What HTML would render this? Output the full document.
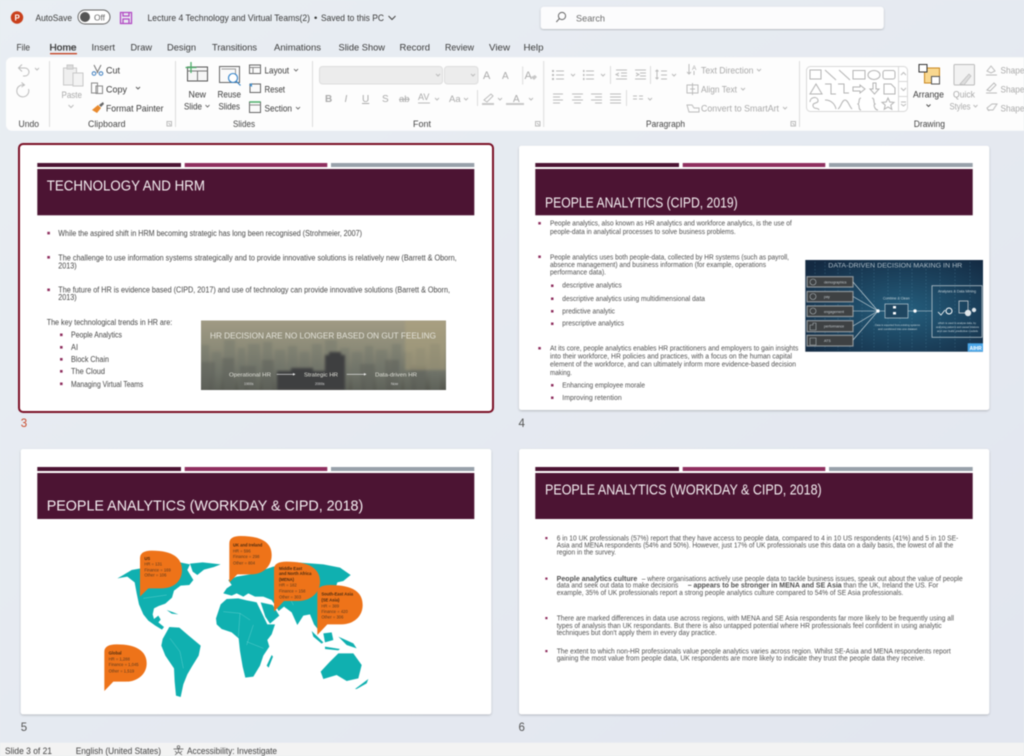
<!DOCTYPE html>
<html lang="en"><head><meta charset="utf-8"><title>Lecture 4 Technology and Virtual Teams</title>
<style>
html,body{margin:0;padding:0;width:1024px;height:756px;overflow:hidden;background:#e8ecf1}
svg{display:block;filter:blur(.42px)}
text{font-family:"Liberation Sans",sans-serif;white-space:pre}
.u{font-size:9.5px;fill:#3a3a3a}
.g{font-size:9.5px;fill:#a9a9a9}
.l{font-size:9px;fill:#444}
.t{font-size:14.5px;fill:#f4eef1}
.a{font-size:8px;fill:#454545}
.b{font-size:7.6px;fill:#505050}
.c{font-size:7px;fill:#505050}
.mm{font-size:12.5px;fill:#5a3a20}
.mb{font-size:12.5px;fill:#4a2a10;font-weight:bold}
.ic{fill:none;stroke:#8a8a8a;stroke-width:1}
.dis{fill:none;stroke:#bcbcbc;stroke-width:1}
</style></head><body>
<svg width="1024" height="756" viewBox="0 0 1024 756" xmlns="http://www.w3.org/2000/svg">
<defs>
<linearGradient id="bg" x1="0" y1="0" x2="1" y2="1"><stop offset="0" stop-color="#e9eef3"/><stop offset="1" stop-color="#e2e6ef"/></linearGradient>
<linearGradient id="city" x1="0" y1="0" x2="0" y2="1"><stop offset="0" stop-color="#a09a84"/><stop offset=".4" stop-color="#8c8b78"/><stop offset=".75" stop-color="#6f7268"/><stop offset="1" stop-color="#55574f"/></linearGradient>
<radialGradient id="net" cx=".55" cy=".55" r=".7"><stop offset="0" stop-color="#255f7e"/><stop offset="1" stop-color="#142a42"/></radialGradient>
<clipPath id="cp1"><rect x="201" y="320.500" width="245" height="69.500"/></clipPath>
<filter id="sh" x="-5%" y="-5%" width="110%" height="110%"><feDropShadow dx="0" dy="1" stdDeviation="1" flood-color="#000" flood-opacity=".22"/></filter>
</defs>
<rect width="1024" height="756" fill="url(#bg)"/>

<!-- title bar -->
<circle cx="17" cy="17.500" r="6.200" fill="#c9401c"/><text x="14.500" y="20.500" style="font-size:8px;font-weight:bold;fill:#fff">P</text>
<text class="u" x="35.500" y="21" textLength="36.500" lengthAdjust="spacingAndGlyphs">AutoSave</text>
<rect x="78" y="10" width="32" height="14" rx="7" fill="#fff" stroke="#666" stroke-width="1"/><circle cx="85" cy="17" r="5" fill="#555"/>
<text x="94" y="20.500" style="font-size:8.500px;fill:#666" textLength="11" lengthAdjust="spacingAndGlyphs">Off</text>
<path d="M120.500 12.500h11v11h-11zM123 12.500v3.500h6v-3.500M123 23.500v-4.500h6v4.500" fill="none" stroke="#b146c2" stroke-width="1.300"/>
<text class="u" x="147.500" y="21" textLength="162.500" lengthAdjust="spacingAndGlyphs">Lecture 4 Technology and Virtual Teams(2)</text>
<text class="u" x="314" y="21">•</text>
<text class="u" x="321" y="21" textLength="63" lengthAdjust="spacingAndGlyphs">Saved to this PC</text>
<path d="M388.500 16l3.500 3.500 3.500-3.500" fill="none" stroke="#444" stroke-width="1"/>
<rect x="540.700" y="6.700" width="343" height="22.300" rx="3" fill="#fcfcfd" filter="url(#sh)"/>
<circle cx="562" cy="16" r="3.600" fill="none" stroke="#666" stroke-width="1"/><path d="M559.300 18.700l-3 3.300" stroke="#666" stroke-width="1"/>
<text x="576" y="21.500" style="font-size:9.500px;fill:#6c6c6c" textLength="29" lengthAdjust="spacingAndGlyphs">Search</text>

<!-- tabs -->
<text class="u" x="16.500" y="50.500" textLength="13.500" lengthAdjust="spacingAndGlyphs">File</text>
<text class="u" x="49.500" y="50.500" textLength="27" lengthAdjust="spacingAndGlyphs" style="stroke:#333;stroke-width:.25;fill:#333">Home</text>
<rect x="50" y="53" width="27" height="1.300" fill="#c43e1c"/>
<text class="u" x="91.500" y="50.500" textLength="23.500" lengthAdjust="spacingAndGlyphs">Insert</text>
<text class="u" x="130.500" y="50.500" textLength="21.500" lengthAdjust="spacingAndGlyphs">Draw</text>
<text class="u" x="167" y="50.500" textLength="29" lengthAdjust="spacingAndGlyphs">Design</text>
<text class="u" x="212" y="50.500" textLength="45" lengthAdjust="spacingAndGlyphs">Transitions</text>
<text class="u" x="274" y="50.500" textLength="47" lengthAdjust="spacingAndGlyphs">Animations</text>
<text class="u" x="338.500" y="50.500" textLength="46.500" lengthAdjust="spacingAndGlyphs">Slide Show</text>
<text class="u" x="399.500" y="50.500" textLength="30.500" lengthAdjust="spacingAndGlyphs">Record</text>
<text class="u" x="445" y="50.500" textLength="29" lengthAdjust="spacingAndGlyphs">Review</text>
<text class="u" x="489" y="50.500" textLength="21" lengthAdjust="spacingAndGlyphs">View</text>
<text class="u" x="523.500" y="50.500" textLength="20" lengthAdjust="spacingAndGlyphs">Help</text>

<!-- ribbon -->
<rect x="6" y="57.300" width="1030" height="73.500" rx="6" fill="#fdfdfd"/>
<g stroke="#dcdcdc" stroke-width="1"><path d="M49.500 61v66M175.500 61v66M312.500 61v66M543.700 61v66M799.500 61v66"/></g>
<text class="l" x="18.500" y="127" textLength="20.500" lengthAdjust="spacingAndGlyphs">Undo</text>
<text class="l" x="88" y="127" textLength="37.500" lengthAdjust="spacingAndGlyphs">Clipboard</text>
<text class="l" x="233" y="127" textLength="22" lengthAdjust="spacingAndGlyphs">Slides</text>
<text class="l" x="413" y="127" textLength="18" lengthAdjust="spacingAndGlyphs">Font</text>
<text class="l" x="646" y="127" textLength="39" lengthAdjust="spacingAndGlyphs">Paragraph</text>
<text class="l" x="913.700" y="127" textLength="31.300" lengthAdjust="spacingAndGlyphs">Drawing</text>
<path class="dis" d="M167 121.500h4.500v4.500h-4.500zM168.500 123l2 2" stroke-width=".8"/>
<path class="dis" d="M535.500 121.500h4.500v4.500h-4.500zM537 123l2 2" stroke-width=".8"/>
<path class="dis" d="M791 121.500h4.500v4.500h-4.500zM792.500 123l2 2" stroke-width=".8"/>

<!-- undo / redo -->
<path class="dis" d="M22 64.500l-3.500 3.500 3.500 3.500M18.500 68h6.500a4 4 0 0 1 0 8h-2" stroke-width="1.200"/>
<path class="dis" d="M35 68l2 2 2-2" stroke-width=".8"/>
<path class="dis" d="M21.500 82.500l3 2.500-3 2M24 85a6 6 0 1 0 4.500 4" stroke-width="1.200"/>

<!-- clipboard -->
<path d="M63.500 68h13v17h-13z" fill="#efefef" stroke="#c8c8c8"/><rect x="67" y="65" width="6" height="4" fill="#dcdcdc" stroke="#c8c8c8"/><rect x="73" y="73" width="10" height="13" fill="#f3f3f3" stroke="#c8c8c8"/>
<text class="g" x="61.500" y="98" textLength="20.500" lengthAdjust="spacingAndGlyphs">Paste</text>
<path class="dis" d="M68.500 105l2.500 2.500 2.500-2.500" stroke-width=".8"/>
<path d="M94 65l4 8M101 65l-4 8" stroke="#777" fill="none"/><circle cx="94" cy="73.500" r="1.800" fill="none" stroke="#3f7fbf"/><circle cx="101" cy="73.500" r="1.800" fill="none" stroke="#3f7fbf"/>
<text class="u" x="106" y="73.500" textLength="14" lengthAdjust="spacingAndGlyphs">Cut</text>
<path class="ic" d="M91.500 83h6v10h-6zM96 86h6.500v7.500h-6.500z"/>
<text class="u" x="106" y="92.500" textLength="21" lengthAdjust="spacingAndGlyphs">Copy</text>
<path d="M136 87l2 2 2-2" fill="none" stroke="#555" stroke-width=".9"/>
<path d="M92 110l6-5 3 3-4 5z" fill="#e98a2d"/><path d="M99 105l4-3 1 2-3 3z" fill="#666"/>
<text class="u" x="106" y="111.500" textLength="57.500" lengthAdjust="spacingAndGlyphs">Format Painter</text>

<!-- slides -->
<rect x="187.500" y="67" width="20" height="14" fill="#f6f6f6" stroke="#555"/><path d="M187.500 71h20M197.500 71v10" stroke="#777"/>
<path d="M191 62v11M185.500 67.500h11" stroke="#4caf6a" stroke-width="1.300"/>
<text class="u" x="188.500" y="97.500" textLength="17.500" lengthAdjust="spacingAndGlyphs">New</text>
<text class="u" x="184" y="109.500" textLength="18" lengthAdjust="spacingAndGlyphs">Slide</text><path d="M205.500 105l2 2 2-2" fill="none" stroke="#555" stroke-width=".8"/>
<path d="M219.500 66.500h20v16h-20z" fill="#fafafa" stroke="#666"/><path d="M221.500 69h14v13" fill="none" stroke="#999"/>
<circle cx="233" cy="78" r="4.500" fill="#fff" stroke="#2f80c8" stroke-width="1.100"/><path d="M236.500 81.500l4 4" stroke="#2f80c8" stroke-width="1.100"/>
<text class="u" x="217.500" y="97.500" textLength="23.500" lengthAdjust="spacingAndGlyphs">Reuse</text>
<text class="u" x="218.500" y="109.500" textLength="21.500" lengthAdjust="spacingAndGlyphs">Slides</text>
<rect x="249.500" y="65" width="11" height="8.500" fill="#fafafa" stroke="#666"/><path d="M249.500 67.500h11M253 67.500v6" stroke="#888"/>
<text class="u" x="264.500" y="73.500" textLength="24.500" lengthAdjust="spacingAndGlyphs">Layout</text><path d="M294 69l2 2 2-2" fill="none" stroke="#555" stroke-width=".8"/>
<rect x="250" y="84" width="10.500" height="8.500" fill="#fafafa" stroke="#666"/><path d="M249 85l3-2v4z" fill="#3f8fd0"/>
<text class="u" x="264.500" y="92.500" textLength="20.500" lengthAdjust="spacingAndGlyphs">Reset</text>
<rect x="249.500" y="102" width="11" height="10.500" fill="#fafafa" stroke="#666"/><path d="M249.500 102h11" stroke="#4caf6a" stroke-width="1.500"/><path d="M249.500 105h11" stroke="#888"/>
<text class="u" x="264.500" y="111.500" textLength="27.500" lengthAdjust="spacingAndGlyphs">Section</text><path d="M296 107l2 2 2-2" fill="none" stroke="#555" stroke-width=".8"/>

<!-- font -->
<rect x="319.500" y="66.500" width="123" height="17.500" rx="3" fill="#ececec" stroke="#dedede"/><path class="dis" d="M436 74l2 2 2-2" stroke-width=".8"/>
<rect x="444.500" y="66.500" width="33.500" height="17.500" rx="3" fill="#ececec" stroke="#dedede"/><path class="dis" d="M471 74l2 2 2-2" stroke-width=".8"/>
<text x="483" y="79" style="font-size:11px;fill:#aaa">A</text><text x="502" y="79" style="font-size:10px;fill:#aaa">A</text>
<path d="M522.700 66.500v18" stroke="#dcdcdc"/>
<text x="524.500" y="79" style="font-size:11px;fill:#aaa">A</text><path d="M531 77l3 3 3-3-2-2z" fill="#c8c8c8"/>
<text x="325" y="102" style="font-size:10px;fill:#aaa;font-weight:bold">B</text>
<text x="344.500" y="102" style="font-size:10px;fill:#aaa;font-style:italic">I</text>
<text x="362" y="102" style="font-size:10px;fill:#aaa;text-decoration:underline">U</text>
<text x="382" y="102" style="font-size:10px;fill:#aaa">S</text>
<text x="399" y="102" style="font-size:9.500px;fill:#aaa;text-decoration:line-through">ab</text>
<text x="418" y="100" style="font-size:9px;fill:#aaa">AV</text><path class="dis" d="M418 103h12" stroke-width=".8"/>
<path class="dis" d="M435 98l2 2 2-2" stroke-width=".8"/>
<text x="449" y="102" style="font-size:9.500px;fill:#aaa">Aa</text><path class="dis" d="M464 98l2 2 2-2" stroke-width=".8"/>
<path d="M477.500 90v16" stroke="#dcdcdc"/>
<path class="dis" d="M484 100l7-6 2 2-6 6z"/><rect x="482" y="103" width="12" height="2" fill="#c8c8c8"/>
<path class="dis" d="M498 98l2 2 2-2" stroke-width=".8"/>
<text x="513" y="102" style="font-size:10px;fill:#aaa">A</text><rect x="506" y="103" width="18" height="2" fill="#c8c8c8"/><path class="dis" d="M529 98l2 2 2-2" stroke-width=".8"/>

<!-- paragraph -->
<path class="dis" d="M556 71h8M556 75h8M556 79h8"/><path d="M552 70h2v2h-2zM552 74h2v2h-2zM552 78h2v2h-2z" fill="#bbb"/><path class="dis" d="M571 74l2 2 2-2" stroke-width=".8"/>
<path class="dis" d="M586 71h8M586 75h8M586 79h8"/><path d="M583 70h1.500v2h-1.500zM583 74h1.500v2h-1.500zM583 78h1.500v2h-1.500z" fill="#bbb"/><path class="dis" d="M601 74l2 2 2-2" stroke-width=".8"/>
<path d="M610.500 66v18M650.500 66v18" stroke="#dcdcdc"/>
<path class="dis" d="M616 70h11M621 73h6M621 76h6M616 79h11M619 73l-3 1.500 3 1.500"/>
<path class="dis" d="M635 70h11M640 73h6M640 76h6M635 79h11M636 73l3 1.500-3 1.500"/>
<path class="dis" d="M657 70v9M655.500 71.500l1.500-1.500 1.500 1.500M655.500 77.500l1.500 1.500 1.500-1.500M661 71h6M661 75h6M661 79h6"/><path class="dis" d="M672 74l2 2 2-2" stroke-width=".8"/>
<path class="dis" d="M553 94h10M553 97h7M553 100h10M553 103h7"/>
<path class="dis" d="M572 94h11M574 97h7M572 100h11M574 103h7"/>
<path class="dis" d="M591 94h11M595 97h7M591 100h11M595 103h7"/>
<path class="dis" d="M610 94h11M610 97h11M610 100h11M610 103h11"/>
<path d="M626.500 90v16" stroke="#dcdcdc"/>
<path class="dis" d="M633 96h4M639 96h4M633 99h4M639 99h4"/><path class="dis" d="M648 98l2 2 2-2" stroke-width=".8"/>
<text x="692" y="70" style="font-size:6.500px;fill:#aaa">A</text><path class="dis" d="M689 64v10M687 72l2 2 2-2M694 71v4"/>
<text class="g" x="701" y="73.500" textLength="52.500" lengthAdjust="spacingAndGlyphs">Text Direction</text><path class="dis" d="M757 69l2 2 2-2" stroke-width=".8"/>
<path class="dis" d="M687 85h11v8h-11zM692.500 83v12M690 89h5"/>
<text class="g" x="701" y="92.500" textLength="36" lengthAdjust="spacingAndGlyphs">Align Text</text><path class="dis" d="M741 88l2 2 2-2" stroke-width=".8"/>
<path class="dis" d="M687 105h5l2 3h5v4h-10z"/>
<text class="g" x="701" y="111.500" textLength="78" lengthAdjust="spacingAndGlyphs">Convert to SmartArt</text><path class="dis" d="M783 107l2 2 2-2" stroke-width=".8"/>

<!-- shapes gallery -->
<rect x="806.500" y="66.500" width="101" height="45" rx="4" fill="#fff" stroke="#d8d8d8"/>
<path d="M898.500 66.500v45M898.500 81.500h9M898.500 96.500h9" stroke="#d8d8d8"/>
<path class="dis" d="M901 75l2.500-2.500 2.500 2.500M901 88l2.500 2.500 2.500-2.500M901 102h5M901 104l2.500 2 2.500-2" stroke-width=".8"/>
<g fill="none" stroke="#b4b4b4" stroke-width="1">
<path d="M810 70h11v9h-11z"/><path d="M825 70l11 10M839 70l11 10"/>
<rect x="853" y="70.500" width="12" height="8.500"/><ellipse cx="874" cy="75" rx="6" ry="4.500"/><rect x="883" y="70.500" width="12" height="8.500" rx="2"/>
<path d="M810 94l6-10 6 10z"/><path d="M825 84h6v10h5"/><path d="M838 84h6v9h5"/><path d="M853 87h7v-2l5 4-5 4v-2h-7z"/><path d="M873 83h3v6h3l-4.500 5-4.500-5h3z"/><path d="M884 94v-10h7l4 4v6z"/>
<path d="M810 102c0-5 7-6 8-2s-6 2-5 6 5 1 6 4"/><path d="M825 100c6 0 10 4 11 9"/><path d="M838 109c3-2 4-9 7-9s4 6 7 9"/>
<path d="M861 98c-3 0-1 5-3 6 2 1 0 6 3 6"/><path d="M872 98c3 0 1 5 3 6-2 1 0 6 3 6"/><path d="M888 98l1.800 4 4.200.400-3.200 2.700 1 4.200-3.800-2.300-3.800 2.300 1-4.200-3.200-2.700 4.200-.400z"/>
</g>
<rect x="924.500" y="68" width="15" height="15" fill="#f9d88f" stroke="#c8861f"/>
<rect x="919" y="64.500" width="8" height="7.500" fill="#fff" stroke="#333"/>
<rect x="931.500" y="76.500" width="8" height="7.500" fill="#fff" stroke="#555"/>
<text class="u" x="913" y="97.500" textLength="31" lengthAdjust="spacingAndGlyphs">Arrange</text><path d="M926.500 104.500l2 2 2-2" fill="none" stroke="#444" stroke-width=".9"/>
<rect x="954" y="64.500" width="20.500" height="20.500" rx="1" fill="#f2f2f2" stroke="#bcbcbc"/><path d="M960 84l9-10 2 2-7 9z" fill="#ddd" stroke="#bbb" stroke-width=".7"/>
<text class="g" x="953" y="97.500" textLength="22" lengthAdjust="spacingAndGlyphs">Quick</text>
<text class="g" x="949.500" y="109.500" textLength="21" lengthAdjust="spacingAndGlyphs">Styles</text><path class="dis" d="M973.500 105l2 2 2-2" stroke-width=".8"/>
<path class="dis" d="M987 71l4-5 4 5-4 2zM986 75h11"/><text class="g" x="1000.500" y="73.500" textLength="24" lengthAdjust="spacingAndGlyphs">Shape</text>
<path class="dis" d="M987 90l7-7 2 2-6 6zM986 93h11"/><text class="g" x="1000.500" y="92.500" textLength="24" lengthAdjust="spacingAndGlyphs">Shape</text>
<path class="dis" d="M987 108l5-4h5l-4 6h-5zM987 108l2 3"/><text class="g" x="1000.500" y="111.500" textLength="24" lengthAdjust="spacingAndGlyphs">Shape</text>

<!-- SLIDE 3 -->
<rect x="19" y="144" width="474" height="268" rx="4" fill="#fff" stroke="#7b1026" stroke-width="2"/>
<rect x="37.300" y="163" width="143.700" height="4" fill="#4c1433"/><rect x="184.700" y="163" width="142.600" height="4" fill="#8f2f5f"/><rect x="331" y="163" width="143.300" height="4" fill="#98a1aa"/>
<rect x="37.300" y="169" width="437" height="46.300" fill="#4c1433"/>
<text class="t" x="46.700" y="190.700" textLength="158.300" lengthAdjust="spacingAndGlyphs">TECHNOLOGY AND HRM</text>
<g fill="#8f2f5f"><rect x="47.300" y="231.800" width="2.600" height="2.600"/><rect x="47.300" y="256" width="2.600" height="2.600"/><rect x="47.300" y="288.500" width="2.600" height="2.600"/><rect x="60" y="333.500" width="2.600" height="2.600"/><rect x="60" y="346" width="2.600" height="2.600"/><rect x="60" y="358" width="2.600" height="2.600"/><rect x="60" y="370" width="2.600" height="2.600"/><rect x="60" y="382.500" width="2.600" height="2.600"/></g>
<text class="a" x="58.300" y="236" textLength="303.700" lengthAdjust="spacingAndGlyphs">While the aspired shift in HRM becoming strategic has long been recognised (Strohmeier, 2007)</text>
<text class="a" x="58.300" y="260.300" textLength="398.400" lengthAdjust="spacingAndGlyphs">The challenge to use information systems strategically and to provide innovative solutions is relatively new (Barrett &amp; Oborn,</text>
<text class="a" x="58.300" y="268.700" textLength="18.400" lengthAdjust="spacingAndGlyphs">2013)</text>
<text class="a" x="58.300" y="292.700" textLength="391.700" lengthAdjust="spacingAndGlyphs">The future of HR is evidence based (CIPD, 2017) and use of technology can provide innovative solutions (Barrett &amp; Oborn,</text>
<text class="a" x="58.300" y="300" textLength="18.400" lengthAdjust="spacingAndGlyphs">2013)</text>
<text class="a" x="46.700" y="325" textLength="125.600" lengthAdjust="spacingAndGlyphs">The key technological trends in HR are:</text>
<text class="a" x="71" y="337.700" textLength="51" lengthAdjust="spacingAndGlyphs">People Analytics</text>
<text class="a" x="71" y="350" textLength="7" lengthAdjust="spacingAndGlyphs">AI</text>
<text class="a" x="71" y="362" textLength="38" lengthAdjust="spacingAndGlyphs">Block Chain</text>
<text class="a" x="71" y="374" textLength="34" lengthAdjust="spacingAndGlyphs">The Cloud</text>
<text class="a" x="71" y="387" textLength="72.300" lengthAdjust="spacingAndGlyphs">Managing Virtual Teams</text>
<!-- skyline image -->
<rect x="201" y="320.500" width="245" height="69.500" fill="url(#city)"/>
<g clip-path="url(#cp1)"><g style="filter:blur(1.200px)">
<path d="M201 345h8v45h-8zM212 352h9v38h-9zM224 340h11v50h-11zM238 348h7v42h-7zM248 344h12v46h-12zM263 342h9v48h-9zM275 350h10v40h-10zM288 346h9v44h-9zM300 352h9v38h-9zM312 344h10v46h-10zM325 340h12v50h-12zM340 348h9v42h-9zM352 352h10v38h-10zM365 346h8v44h-8zM376 350h11v40h-11zM392 344h9v46h-9zM404 352h8v38h-8zM416 348h9v42h-9zM430 344h10v46h-10z" fill="#6f7268" opacity=".4"/>
<path d="M201 362h14v28h-14zM222 358h12v32h-12zM240 366h16v24h-16zM262 360h12v30h-12zM360 364h15v26h-15zM385 360h14v30h-14zM410 366h16v24h-16z" fill="#5d6058" opacity=".45"/>
<path d="M277 371h14v-3h22v3h12v-16h4v-3h12v3h4v35h-68z" fill="#3e3f40"/>
<rect x="405" y="320" width="41" height="50" fill="#b3a77e" opacity=".45"/>
</g></g>
<text x="210" y="338.700" style="font-size:8.500px;fill:#e4e3da" textLength="226" lengthAdjust="spacingAndGlyphs">HR DECISION ARE NO LONGER BASED ON GUT FEELING</text>
<g style="font-size:5.500px;fill:#e0e0d8"><text x="229" y="376.700" textLength="42" lengthAdjust="spacingAndGlyphs">Operational HR</text><text x="304" y="376.700" textLength="34" lengthAdjust="spacingAndGlyphs">Strategic HR</text><text x="375" y="376.700" textLength="42" lengthAdjust="spacingAndGlyphs">Data-driven HR</text></g>
<g style="font-size:3.500px;fill:#ddd"><text x="244" y="385">1900s</text><text x="315" y="385">2000s</text><text x="391" y="385">Now</text></g>
<path d="M276.700 374.300h17M346.700 374.300h18" stroke="#eee" stroke-width=".7"/><path d="M293 373l2.500 1.300-2.500 1.300zM364 373l2.500 1.300-2.500 1.300z" fill="#eee"/>
<text x="20.700" y="427" style="font-size:11.500px;fill:#c9492a">3</text>

<!-- SLIDE 4 -->
<rect x="519" y="145.700" width="470.300" height="264.300" rx="2.500" fill="#fff" filter="url(#sh)"/>
<rect x="535.300" y="163" width="143.700" height="4" fill="#4c1433"/><rect x="682.700" y="163" width="142.600" height="4" fill="#8f2f5f"/><rect x="829" y="163" width="143.700" height="4" fill="#98a1aa"/>
<rect x="535.300" y="169" width="437.400" height="46.300" fill="#4c1433"/>
<text class="t" x="545" y="207.300" textLength="192.700" lengthAdjust="spacingAndGlyphs">PEOPLE ANALYTICS (CIPD, 2019)</text>
<g fill="#8f2f5f"><rect x="538.300" y="222" width="2.500" height="2.500"/><rect x="538.300" y="255.500" width="2.500" height="2.500"/><rect x="551" y="284.500" width="2.500" height="2.500"/><rect x="551" y="297.500" width="2.500" height="2.500"/><rect x="551" y="310" width="2.500" height="2.500"/><rect x="551" y="322.500" width="2.500" height="2.500"/><rect x="538.300" y="347" width="2.500" height="2.500"/><rect x="551" y="384" width="2.500" height="2.500"/><rect x="551" y="396.500" width="2.500" height="2.500"/></g>
<text class="b" x="550" y="225.700" textLength="241.700" lengthAdjust="spacingAndGlyphs">People analytics, also known as HR analytics and workforce analytics, is the use of</text>
<text class="b" x="550" y="234" textLength="185.700" lengthAdjust="spacingAndGlyphs">people-data in analytical processes to solve business problems.</text>
<text class="b" x="550" y="259.300" textLength="239" lengthAdjust="spacingAndGlyphs">People analytics uses both people-data, collected by HR systems (such as payroll,</text>
<text class="b" x="550" y="267" textLength="216" lengthAdjust="spacingAndGlyphs">absence management) and business information (for example, operations</text>
<text class="b" x="550" y="274.700" textLength="56" lengthAdjust="spacingAndGlyphs">performance data).</text>
<text class="b" x="562.300" y="287.700" textLength="59.400" lengthAdjust="spacingAndGlyphs">descriptive analytics</text>
<text class="b" x="562.300" y="301" textLength="142.700" lengthAdjust="spacingAndGlyphs">descriptive analytics using multidimensional data</text>
<text class="b" x="562.300" y="313.300" textLength="52.700" lengthAdjust="spacingAndGlyphs">predictive analytic</text>
<text class="b" x="562.300" y="325.700" textLength="61.700" lengthAdjust="spacingAndGlyphs">prescriptive analytics</text>
<text class="b" x="550" y="350.700" textLength="248.300" lengthAdjust="spacingAndGlyphs">At its core, people analytics enables HR practitioners and employers to gain insights</text>
<text class="b" x="550" y="358.700" textLength="242" lengthAdjust="spacingAndGlyphs">into their workforce, HR policies and practices, with a focus on the human capital</text>
<text class="b" x="550" y="366.700" textLength="246" lengthAdjust="spacingAndGlyphs">element of the workforce, and can ultimately inform more evidence-based decision</text>
<text class="b" x="550" y="375" textLength="22" lengthAdjust="spacingAndGlyphs">making.</text>
<text class="b" x="562.300" y="387.700" textLength="82.700" lengthAdjust="spacingAndGlyphs">Enhancing employee morale</text>
<text class="b" x="562.300" y="400" textLength="59.400" lengthAdjust="spacingAndGlyphs">Improving retention</text>
<!-- data image -->
<rect x="805.300" y="260" width="177.700" height="91.700" fill="url(#net)"/>
<path d="M815 262v88M825 262v88M838 262v88M850 262v88M862 262v88M874 262v88M888 262v88M900 262v88M912 262v88M926 262v88M940 262v88M955 262v88M970 262v88" stroke="#5a93ad" stroke-width=".8" stroke-dasharray="1.500 2" opacity=".35"/>
<text x="828.300" y="267.300" style="font-size:6.800px;fill:#aebcc6" textLength="134" lengthAdjust="spacingAndGlyphs">DATA-DRIVEN DECISION MAKING IN HR</text>
<g fill="#3e4143" stroke="#8f9599" stroke-width="1.200"><rect x="807" y="276.700" width="46" height="10.300"/><rect x="807" y="291.500" width="46" height="10.300"/><rect x="807" y="306" width="46" height="10.500"/><rect x="807" y="320.700" width="46" height="11"/><rect x="807" y="335.300" width="46" height="10.700"/></g>
<g fill="none" stroke="#aab2b6" stroke-width=".6"><circle cx="813" cy="282" r="3"/><circle cx="813" cy="296.500" r="3"/><circle cx="813" cy="311" r="3"/><path d="M810 330v-5h3v-2h3v7zM810 338h6v7h-6z"/></g>
<g style="font-size:3.600px;fill:#c4cbcf"><text x="824" y="283.500">demographics</text><text x="824" y="298">pay</text><text x="824" y="313">engagement</text><text x="824" y="327.500">performance</text><text x="824" y="342">ATS</text></g>
<path d="M853 282L878 311M853 296.500L878 311M853 311H878M853 326L878 311M853 340L878 311M878 311H932" fill="none" stroke="#cdd8dd" stroke-width=".6"/>
<circle cx="878" cy="311" r="1.700" fill="#fff"/><circle cx="915" cy="311" r="1.700" fill="#fff"/>
<rect x="885" y="304" width="23" height="14" fill="#1f4660" stroke="#d5dfe4" stroke-width=".6"/><rect x="893" y="306" width="3" height="2.500" fill="#fff"/><rect x="893" y="312" width="3" height="2.500" fill="#fff"/>
<text x="883" y="299.500" style="font-size:3.400px;fill:#c7d4da">Combine &amp; Clean</text>
<text x="875" y="326" style="font-size:2.800px;fill:#c7d4da" textLength="45" lengthAdjust="spacingAndGlyphs">Data is exported from existing systems</text>
<text x="878" y="330" style="font-size:2.800px;fill:#c7d4da" textLength="39" lengthAdjust="spacingAndGlyphs">and combined into one dataset</text>
<rect x="932" y="285.700" width="50" height="51.600" fill="none" stroke="#b4c2c9" stroke-width=".8"/>
<text x="938" y="292.500" style="font-size:3.400px;fill:#c7d4da" textLength="38" lengthAdjust="spacingAndGlyphs">Analyses &amp; Data Mining</text>
<path d="M938 312l3 3 4-5" fill="none" stroke="#fff" stroke-width=".8"/><circle cx="949" cy="311" r="3" fill="none" stroke="#fff"/>
<rect x="959" y="301" width="9" height="12" fill="none" stroke="#ddd" stroke-width=".7"/><circle cx="968" cy="313" r="3.200" fill="#dfe6ea"/><circle cx="974" cy="310" r="2.200" fill="#dfe6ea"/>
<g style="font-size:2.600px;fill:#c7d4da"><text x="938" y="324" textLength="38" lengthAdjust="spacingAndGlyphs">which is used to analyse data, by</text><text x="936" y="328" textLength="43" lengthAdjust="spacingAndGlyphs">analysing patterns and causal relations</text><text x="937" y="332" textLength="41" lengthAdjust="spacingAndGlyphs">and can build predictive models</text></g>
<rect x="967.700" y="343.300" width="15.300" height="8.400" fill="#4aa6e8"/><text x="969.500" y="350" style="font-size:5px;fill:#fff;font-weight:bold">AIHR</text>
<text x="518.500" y="427" style="font-size:11.500px;fill:#555">4</text>

<!-- SLIDE 5 -->
<rect x="20.700" y="449" width="470.600" height="265.300" rx="2.500" fill="#fff" filter="url(#sh)"/>
<rect x="37.300" y="467" width="143.700" height="4" fill="#4c1433"/><rect x="184.700" y="467" width="142.600" height="4" fill="#8f2f5f"/><rect x="331" y="467" width="143.300" height="4" fill="#98a1aa"/>
<rect x="37.300" y="473" width="437" height="46" fill="#4c1433"/>
<text class="t" x="46.700" y="510.700" textLength="316.600" lengthAdjust="spacingAndGlyphs">PEOPLE ANALYTICS (WORKDAY &amp; CIPD, 2018)</text>
<g transform="translate(90 525) scale(.33333)">
<g fill="#10b0b0">
<path d="M82 160L100 150 125 135 165 128 270 112 300 118 292 135 310 165 298 180 272 182 252 197 246 218 226 236 206 243 192 250 188 268 192 282 205 272 212 284 205 292 222 306 216 314 196 302 175 287 160 268 147 238 140 205 134 172 112 155Z"/>
<path d="M300 116L338 112 392 118 372 126 342 134 322 150 308 140Z"/>
<path d="M230 255L250 262 265 268 245 266Z"/>
<path d="M218 342L238 306 268 308 296 332 332 362 326 392 306 424 292 448 280 478 272 516 258 512 254 470 252 430 226 392 214 362Z"/>
<path d="M378 280L392 238 410 222 445 220 470 226 500 232 516 265 532 298 555 298 545 328 532 345 538 365 520 392 510 422 490 455 466 458 458 425 450 378 446 340 425 322 395 312 380 298Z"/>
<path d="M530 422L545 390 549 395 536 428Z"/>
<path d="M400 205L410 190 425 180 415 165 440 155 480 148 550 125 620 112 700 118 750 128 782 150 760 168 742 172 735 195 715 215 705 245 692 258 695 290 688 318 672 298 660 268 640 272 622 300 605 262 582 245 566 258 545 225 520 215 495 215 475 205 460 215 440 205 425 212Z"/>
<path d="M512 232L548 240 568 272 540 296 526 275Z"/>
<path d="M692 440L720 410 745 385 790 385 815 420 805 460 770 468 740 450 700 462Z"/>
<path d="M795 492L835 462 830 475 800 492Z"/>
<path d="M665 318L700 352 695 356 670 335ZM705 365L750 372 745 376 705 372ZM700 325L725 322 730 345 705 352ZM745 335L790 355 800 370 770 360Z"/>
</g>
<path d="M400 260l50 5 30 20M450 265l-5 70M240 340l30 40 10 50M470 350l50 20M490 300l-20 60M160 220l70-10M590 200l20 40" fill="none" stroke="#7fdada" stroke-width="1"/>
<g fill="#ee7319">
<path d="M150 215V100Q150 77 185 77C250 77 276 100 276 135 276 170 250 190 215 190H175Z"/>
<path d="M418 172V55Q418 33 452 33C518 33 545 55 545 90 545 125 518 148 485 148H442Z"/>
<path d="M552 260V132Q552 110 590 110C660 110 690 132 690 170 690 205 660 228 625 228H582Z"/>
<path d="M682 330V202Q682 180 720 180C790 180 818 202 818 240 818 275 790 298 755 298H712Z"/>
<path d="M43 498V380Q43 358 80 358C142 358 170 380 170 415 170 448 142 470 108 470H70Z"/>
</g>
<text class="mb" x="163" y="105">US</text><text class="mm" x="163" y="122">HR = 131</text><text class="mm" x="163" y="139">Finance = 169</text><text class="mm" x="163" y="155">Other = 106</text>
<text class="mb" x="429" y="65">UK and Ireland</text><text class="mm" x="429" y="82">HR = 596</text><text class="mm" x="429" y="99">Finance = 298</text><text class="mm" x="429" y="118">Other = 804</text>
<text class="mb" x="567" y="135">Middle East</text><text class="mb" x="567" y="150">and North Africa</text><text class="mb" x="567" y="168">(MENA)</text><text class="mm" x="567" y="185">HR = 182</text><text class="mm" x="567" y="202">Finance = 158</text><text class="mm" x="567" y="220">Other = 303</text>
<text class="mb" x="694" y="212">South-East Asia</text><text class="mb" x="694" y="229">(SE Asia)</text><text class="mm" x="694" y="248">HR = 389</text><text class="mm" x="694" y="264">Finance = 420</text><text class="mm" x="694" y="280">Other = 306</text>
<text class="mb" x="56" y="389">Global</text><text class="mm" x="56" y="406">HR = 1,288</text><text class="mm" x="56" y="423">Finance = 1,045</text><text class="mm" x="56" y="442">Other = 1,519</text>
</g>
<text x="20.700" y="731" style="font-size:11.500px;fill:#555">5</text>

<!-- SLIDE 6 -->
<rect x="519" y="449" width="470.300" height="265.300" rx="2.500" fill="#fff" filter="url(#sh)"/>
<rect x="535.300" y="467" width="143.700" height="4" fill="#4c1433"/><rect x="682.700" y="467" width="142.600" height="4" fill="#8f2f5f"/><rect x="829" y="467" width="143.700" height="4" fill="#98a1aa"/>
<rect x="535.300" y="473" width="437.400" height="46" fill="#4c1433"/>
<text class="t" x="545" y="494.300" textLength="276.700" lengthAdjust="spacingAndGlyphs">PEOPLE ANALYTICS (WORKDAY &amp; CIPD, 2018)</text>
<g fill="#8f2f5f"><rect x="545.300" y="537" width="2.200" height="2.200"/><rect x="545.300" y="577.500" width="2.200" height="2.200"/><rect x="545.300" y="617" width="2.200" height="2.200"/><rect x="545.300" y="650" width="2.200" height="2.200"/></g>
<text class="c" x="556.700" y="540.700" textLength="401.600" lengthAdjust="spacingAndGlyphs">6 in 10 UK professionals (57%) report that they have access to people data, compared to 4 in 10 US respondents (41%) and 5 in 10 SE-</text>
<text class="c" x="556.700" y="547.700" textLength="396.600" lengthAdjust="spacingAndGlyphs">Asia and MENA respondents (54% and 50%). However, just 17% of UK professionals use this data on a daily basis, the lowest of all the</text>
<text class="c" x="556.700" y="554.700" textLength="59.300" lengthAdjust="spacingAndGlyphs">region in the survey.</text>
<text class="c" x="556.700" y="581" textLength="80.600" lengthAdjust="spacingAndGlyphs" style="font-weight:bold">People analytics culture</text>
<text class="c" x="641.700" y="581" textLength="321" lengthAdjust="spacingAndGlyphs">– where organisations actively use people data to tackle business issues, speak out about the value of people</text>
<text class="c" x="556.700" y="587.700" textLength="121.600" lengthAdjust="spacingAndGlyphs">data and seek out data to make decisions</text>
<text class="c" x="687.700" y="587.700" textLength="154" lengthAdjust="spacingAndGlyphs" style="font-weight:bold">– appears to be stronger in MENA and SE Asia</text>
<text class="c" x="843.500" y="587.700" textLength="94.800" lengthAdjust="spacingAndGlyphs">than the UK, Ireland the US. For</text>
<text class="c" x="556.700" y="595" textLength="346.600" lengthAdjust="spacingAndGlyphs">example, 35% of UK professionals report a strong people analytics culture compared to 54% of SE Asia professionals.</text>
<text class="c" x="556.700" y="620.700" textLength="397.300" lengthAdjust="spacingAndGlyphs">There are marked differences in data use across regions, with MENA and SE Asia respondents far more likely to be frequently using all</text>
<text class="c" x="556.700" y="628" textLength="385" lengthAdjust="spacingAndGlyphs">types of analysis than UK respondants. But there is also untapped potential where HR professionals feel confident in using analytic</text>
<text class="c" x="556.700" y="635" textLength="160" lengthAdjust="spacingAndGlyphs">techniques but don't apply them in every day practice.</text>
<text class="c" x="556.700" y="653.700" textLength="394" lengthAdjust="spacingAndGlyphs">The extent to which non-HR professionals value people analytics varies across region. Whilst SE-Asia and MENA respondents report</text>
<text class="c" x="556.700" y="660.700" textLength="368.300" lengthAdjust="spacingAndGlyphs">gaining the most value from people data, UK respondents are more likely to indicate they trust the people data they receive.</text>
<text x="518.500" y="731" style="font-size:11.500px;fill:#555">6</text>

<!-- status bar -->
<rect x="0" y="742.700" width="1024" height="13.300" fill="#f3f3f3"/>
<text x="5" y="754" style="font-size:9px;fill:#444" textLength="47" lengthAdjust="spacingAndGlyphs">Slide 3 of 21</text>
<text x="75.700" y="754" style="font-size:9px;fill:#444" textLength="85.300" lengthAdjust="spacingAndGlyphs">English (United States)</text>
<circle cx="178.500" cy="747" r="1.300" fill="none" stroke="#555" stroke-width=".7"/><path d="M173.500 749h10M178.500 749v3M175 755l3.500-3 3.500 3M175 751l2 2M182 751l-2 2" fill="none" stroke="#555" stroke-width=".7"/>
<text x="187" y="754" style="font-size:9px;fill:#444" textLength="90" lengthAdjust="spacingAndGlyphs">Accessibility: Investigate</text>
</svg>
</body></html>
